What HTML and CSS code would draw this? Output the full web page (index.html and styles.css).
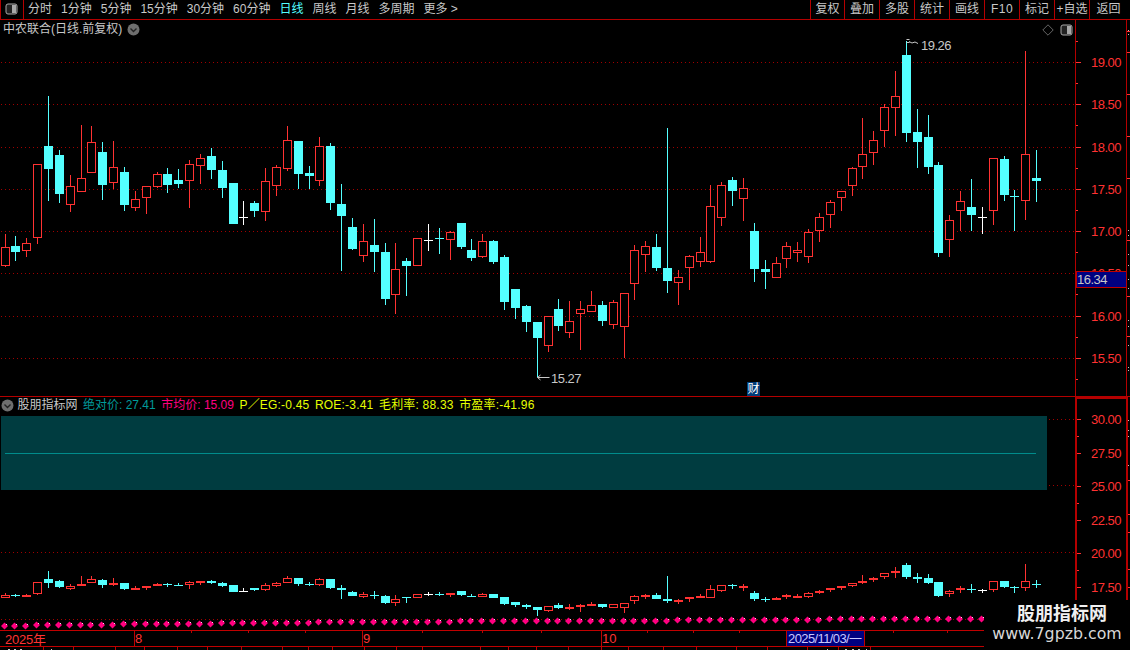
FILE: index.html
```html
<!DOCTYPE html>
<html lang="zh-CN">
<head>
<meta charset="utf-8">
<title>中农联合 日线</title>
<link rel="stylesheet" href="styles.css">
</head>
<body>
<div class="app">
  <header class="topbar">
    <div class="panel-toggle">
      <svg class="panel-icon" width="13" height="12" viewBox="0 0 13 12"><rect x="1" y="1" width="11" height="10" rx="2" fill="#222" stroke="#a8a8a8"/><rect x="7" y="2" width="4" height="8" fill="#a8a8a8"/></svg>
    </div>
    <nav class="periods">
      <span class="period">分时</span><span class="period">1分钟</span><span class="period">5分钟</span><span class="period">15分钟</span><span class="period">30分钟</span><span class="period">60分钟</span><span class="period active">日线</span><span class="period">周线</span><span class="period">月线</span><span class="period">多周期</span><span class="period">更多 &gt;</span>
    </nav>
    <div class="tools">
      <span class="tool first">复权</span><span class="tool">叠加</span><span class="tool">多股</span><span class="tool">统计</span><span class="tool">画线</span><span class="tool f10">F10</span><span class="tool">标记</span><span class="tool">+自选</span><span class="tool last">返回</span>
    </div>
  </header>

  <section class="pane main-pane">
    <div class="plot">
      <svg id="mainPlot" class="layer" viewBox="0 20 1075 376" width="1075" height="376"></svg>
      <div class="title-row">
        <span class="stock-title">中农联合(日线.前复权)</span>
        <svg class="chev" width="13" height="13" viewBox="0 0 13 13"><circle cx="6.5" cy="6.5" r="6" fill="#6e6e6e"/><path d="M3.5 5.5l3 3 3-3" fill="none" stroke="#222" stroke-width="1.4"/></svg>
      </div>
      <div class="pane-icons">
        <svg width="12" height="12" viewBox="0 0 12 12"><path d="M6 .8l5.2 5.2-5.2 5.2-5.2-5.2z" fill="none" stroke="#666"/></svg>
        <svg width="13" height="12" viewBox="0 0 13 12"><rect x="1" y="1" width="11" height="10" rx="2" fill="#222" stroke="#a8a8a8"/><rect x="7" y="2" width="4" height="8" fill="#a8a8a8"/></svg>
      </div>
      <span class="cai-badge">财</span>
    </div>
    <div class="axis"><svg id="mainAxis" viewBox="1076 20 50 376" width="50" height="376"></svg></div>
    <div class="edge"><svg id="mainEdge" viewBox="1127 20 3 376" width="3" height="376"></svg></div>
  </section>

  <section class="pane lower-pane">
    <div class="lower-left">
      <div class="legend">
        <svg class="chev-l" width="13" height="13" viewBox="0 0 13 13"><circle cx="6.5" cy="6.5" r="6" fill="#6e6e6e"/><path d="M3.5 5.5l3 3 3-3" fill="none" stroke="#222" stroke-width="1.4"/></svg>
        <span class="ind-name">股朋指标网</span>
        <span class="teal">绝对价: 27.41</span>
        <span class="pink">市均价: 15.09</span>
        <span class="yellow">P／EG:-0.45</span>
        <span class="yellow">ROE:-3.41</span>
        <span class="yellow">毛利率: 88.33</span>
        <span class="yellow">市盈率:-41.96</span>
      </div>
      <svg id="lowerPlot" viewBox="0 416 1075 214" width="1075" height="214"></svg>
    </div>
    <div class="axis axis-lower"><svg id="lowerAxis" viewBox="1077 399 49 231" width="49" height="231"></svg></div>
    <div class="edge edge-lower"><svg id="lowerEdge" viewBox="1128 397 2 233" width="2" height="233"></svg></div>
  </section>

  <svg id="timeAxis" class="time-axis" viewBox="0 630 1130 20" width="1130" height="20"></svg>

  <aside class="watermark">
    <div class="wm-cn">股朋指标网</div>
    <div class="wm-url">www.7gpzb.com</div>
  </aside>
</div>
<script src="chart.js"></script>
</body>
</html>
```
FILE: styles.css
```css
* { box-sizing: border-box; }
html, body { margin: 0; padding: 0; background: #000; }
body { font-family: "Liberation Sans", "Noto Sans CJK SC", sans-serif; color: #c8c8c8; font-size: 12px; }
svg { display: block; }
.app { position: relative; width: 1130px; height: 650px; overflow: hidden; background: #000; }

.topbar { display: flex; align-items: stretch; height: 20px; border-bottom: 1px solid #b40000; }
.panel-toggle { width: 24px; border-left: 1px solid #b40000; border-right: 1px solid #b40000; padding: 3px 0 0 4px; }
.periods { display: flex; gap: 9px; padding-left: 4px; line-height: 18px; font-size: 12px; }
.period { white-space: nowrap; }
.period.active { color: #54ffff; }
.tools { display: flex; margin-left: auto; padding-right: 3px; }
.tool { width: 35px; border-left: 1px solid #b40000; text-align: center; line-height: 18px; white-space: nowrap; }
.tool.first { width: 34px; }
.tool.last { width: 38px; }
.tool.f10 { letter-spacing: 0.5px; }

.pane { display: flex; }
.main-pane { height: 377px; border-bottom: 1px solid #b40000; }
.plot { position: relative; width: 1075px; }
.layer { position: absolute; left: 0; top: 0; }
.title-row { position: relative; display: flex; align-items: center; gap: 5px; padding: 2px 0 0 3px; line-height: 15px; }
.stock-title { letter-spacing: 0; }
.pane-icons { position: absolute; right: 2px; top: 4px; display: flex; gap: 6px; }
.cai-badge { position: absolute; left: 747px; top: 362px; width: 13px; height: 14px; background: #003c78; color: #fff; font-size: 12px; line-height: 14px; text-align: center; }

.axis { width: 52px; border-left: 1px solid #b40000; border-right: 1px solid #b40000; }
.edge { width: 3px; }

.lower-pane { height: 233px; }
.lower-left { width: 1075px; }
.legend { display: flex; align-items: center; height: 19px; padding: 0 0 3px 1px; white-space: nowrap; gap: 5.5px; line-height: 15px; }
.chev-l { margin-right: -2px; }
.ind-name { color: #c8c8c8; }
.teal { color: #009a9a; }
.pink { color: #ff0080; }
.yellow { color: #e6ff00; letter-spacing: 0.2px; }
.axis-lower { width: 53px; border-left-width: 2px; border-right-width: 2px; border-top: 2px solid #b40000; }
.edge-lower { width: 2px; }

.time-axis { position: relative; }

.watermark { position: absolute; left: 984px; top: 600px; width: 146px; height: 50px; background: #000; text-align: center; color: #e4e4e4; }
.wm-cn { font-size: 18px; font-weight: 700; line-height: 24px; padding-top: 2px; margin-left: 10px; color: #f0f0f0; }
.wm-url { font-family: "DejaVu Sans", sans-serif; font-size: 15.8px; line-height: 16px; color: #d8d8d8; }
```
FILE: chart.js
```js
// [centre, high, bodyTop, bodyBottom, low, type] in 3x crop coordinates per segment
var segments = [
  { x0: 0, y0: 90, rows: [
    [16,432,472,527,530,'r'],[46,438,468,486,513,'c'],[79,444,460,482,500,'r'],[112,223,223,443,461,'r'],
    [145,18,168,237,333,'c'],[178,180,195,312,339,'c'],[211,255,289,344,366,'r'],[244,105,265,305,305,'r'],
    [274,108,157,248,248,'r'],[307,156,186,285,330,'c'],[340,153,232,278,298,'r'],[373,231,246,345,363,'c'],
    [406,303,328,353,363,'r'],[439,289,289,323,372,'r'],[472,246,253,290,295,'r'],[502,234,252,285,309,'c'],
    [535,237,270,282,294,'c'],[568,210,223,272,354,'r'],[601,192,205,227,282,'r'],[634,174,198,240,267,'c'],
    [667,213,240,294,324,'c'],[700,279,279,402,402,'c'],[730,333,381,381,405,'w'],[763,333,339,363,381,'c'],
    [796,234,274,365,393,'r'],[829,225,232,287,318,'r']
  ]},
  { x0: 280, y0: 120, rows: [
    [22,18,61,146,153,'r'],[55,63,63,161,207,'c'],[88,138,159,168,207,'c'],[118,51,79,182,198,'r'],
    [151,69,78,249,270,'c'],[184,192,252,288,453,'c'],[217,294,321,387,390,'c'],[250,312,364,407,426,'r'],
    [283,297,375,396,456,'c'],[316,369,396,537,555,'c'],[346,369,448,524,582,'r'],[379,414,423,438,528,'c'],
    [412,355,355,437,437,'r'],[445,312,361,361,393,'w'],[478,324,355,355,402,'c'],[511,333,337,359,420,'r'],
    [544,309,309,381,387,'c'],[574,357,390,414,423,'c'],[607,342,364,410,414,'r'],[640,361,363,426,432,'c'],
    [673,405,411,546,570,'c'],[706,507,507,564,597,'c'],[739,555,558,606,636,'c'],[772,606,606,654,771,'c'],
    [805,589,589,677,696,'r'],[835,537,567,618,633,'c']
  ]},
  { x0: 560, y0: 120, rows: [
    [28,543,604,638,654,'r'],[61,543,568,581,690,'r'],[94,513,556,575,575,'r'],[127,543,555,603,618,'c'],
    [160,540,547,614,627,'r'],[193,520,520,620,714,'r'],[223,375,391,491,540,'r'],[256,363,379,404,456,'r'],
    [289,342,381,444,453,'c'],[322,24,444,483,519,'c'],[355,450,472,488,555,'r'],[388,405,409,443,510,'r'],
    [421,351,397,425,441,'r'],[451,195,259,425,429,'r'],[484,186,196,293,318,'r'],[517,171,180,213,258,'c'],
    [550,174,205,236,303,'r'],[583,309,333,447,486,'c'],[616,420,447,456,507,'c'],[649,411,430,473,473,'r'],
    [679,366,379,416,444,'r'],[712,366,391,398,426,'r'],[745,327,337,410,429,'r'],[778,279,292,332,366,'r'],
    [811,240,247,284,324,'r']
  ]},
  { x0: 790, y0: 30, rows: [
    [154,484,484,503,543,'r'],[187,412,415,467,498,'r'],[217,264,373,412,447,'r'],[250,303,331,368,405,'r'],
    [283,222,232,302,351,'r'],[316,123,199,233,318,'r'],[349,33,75,308,336,'c'],[382,237,306,336,414,'c'],
    [415,255,321,411,432,'c'],[445,396,405,669,681,'c'],[478,555,571,629,681,'r'],[511,483,514,542,603,'r'],
    [544,447,531,555,603,'c'],[577,531,560,560,612,'w'],[610,385,385,542,585,'r'],[643,378,387,495,513,'c'],
    [673,480,497,497,603,'c'],[706,63,373,512,570,'r'],[739,360,444,453,516,'c']
  ]}
];

var RED = '#ff3232', CYAN = '#54ffff', WHITE = '#ffffff', AXIS = '#c00000';
var COLORS = { r: RED, c: CYAN, w: WHITE };

var candles = [];
segments.forEach(function (s) {
  s.rows.forEach(function (r) {
    candles.push({
      x: Math.floor(s.x0 + r[0] / 3),
      hi: s.y0 + r[1] / 3, top: s.y0 + r[2] / 3, bot: s.y0 + r[3] / 3, lo: s.y0 + r[4] / 3,
      t: r[5]
    });
  });
});

function line(x1, y1, x2, y2, c, extra) {
  return '<line x1="' + x1 + '" y1="' + y1 + '" x2="' + x2 + '" y2="' + y2 + '" stroke="' + c + '" ' + (extra || '') + '/>';
}
function hdots(y, x1, x2) {
  var s = '';
  for (var x = x1 + 1; x < x2; x += 4) {
    s += '<rect x="' + x + '" y="' + y + '" width="1" height="1" fill="#a00000"/>';
  }
  return s;
}
function label(x, y, txt, c) {
  return '<text class="num" x="' + x + '" y="' + y + '" fill="' + c + '" font-family="Liberation Sans" font-size="13" letter-spacing="-0.5">' + txt + '</text>';
}

function drawCandle(k, mapY) {
  var cx = k.x + 0.5, c = COLORS[k.t];
  var hi = Math.round(mapY(k.hi)), top = Math.round(mapY(k.top)), bot = Math.round(mapY(k.bot)), lo = Math.round(mapY(k.lo));
  var out = '';
  if (hi < top) out += line(cx, hi, cx, top, c);
  if (lo > bot) out += line(cx, bot, cx, lo, c);
  if (bot - top <= 1) {
    out += '<rect x="' + (k.x - 4) + '" y="' + top + '" width="9" height="' + (k.t === 'r' ? 2 : 1) + '" fill="' + c + '"/>';
  } else if (k.t === 'r') {
    out += '<rect x="' + (k.x - 3.5) + '" y="' + (top + 0.5) + '" width="8" height="' + (bot - top - 1) + '" fill="#000" stroke="' + c + '"/>';
  } else {
    out += '<rect x="' + (k.x - 4) + '" y="' + top + '" width="9" height="' + (bot - top) + '" fill="' + c + '"/>';
  }
  return out;
}

function set(id, html) {
  var el = document.getElementById(id);
  el.setAttribute('shape-rendering', 'crispEdges');
  el.innerHTML = html;
}

/* main plot */
var html = '';
[62, 104, 147, 189, 231, 273, 316, 358].forEach(function (y) { html += hdots(y, 0, 1075); });
candles.forEach(function (k) { html += drawCandle(k, function (y) { return y; }); });
html += '<g shape-rendering="auto">';
html += '<path d="M906.5 39.5h3M906.5 42.5h3M909 41.5l3 1.5 3-1 3 1.5" fill="none" stroke="#c8c8c8"/>';
html += label(921, 50, '19.26', '#c8c8c8');
html += '<path d="M537.5 377.5h12M537.5 377.5l3-2.5M537.5 377.5l3 2.5" fill="none" stroke="#c8c8c8"/>';
html += label(551, 383, '15.27', '#c8c8c8');
html += '</g>';
set('mainPlot', html);

/* main axis */
var ax = '';
var mainLabels = [['19.00',62],['18.50',104],['18.00',147],['17.50',189],['17.00',231],['16.50',273],['16.00',316],['15.50',358]];
mainLabels.forEach(function (l, i) {
  ax += line(1076, l[1] + 0.5, 1081, l[1] + 0.5, RED);
  ax += label(1091, l[1] + 5, l[0], RED);
  ax += line(1076, l[1] + 21.5, 1078, l[1] + 21.5, RED);
});
ax += line(1076, 41.5, 1078, 41.5, RED);
ax += '<rect x="1076" y="271.5" width="50" height="16" fill="#000080" stroke="' + AXIS + '"/>';
ax += label(1077, 284, '16.34', '#c8c8c8');
set('mainAxis', ax);

/* right edge */
function edge(ys, whites) {
  var s = '';
  ys.forEach(function (y) { s += line(1127, y + 0.5, 1130, y + 0.5, RED); });
  whites.forEach(function (y) { s += line(1128.5, y, 1128.5, y + 1, '#c8c8c8'); });
  return s;
}
set('mainEdge', edge([31, 52, 94, 136, 178, 240, 296, 336], [30, 34, 230, 235, 254, 265, 279, 288, 320, 326, 345, 367, 370]));
set('lowerEdge', edge([480, 514, 532, 569, 587], [420, 430, 436, 465]));

/* lower plot */
var lo = '';
[419, 485, 552, 619].forEach(function (y) { lo += hdots(y, 0, 1075); });
lo += '<rect x="1" y="416" width="1046" height="74" fill="#003c40"/>';
lo += line(5, 453.5, 1036, 453.5, '#008c8c');
var mapLow = function (y) { return 566.0 + (y - 62.3) * 0.1584; };
candles.forEach(function (k) { lo += drawCandle(k, mapLow); });
candles.forEach(function (k) {
  var x = k.x - 0.5;
  if (x > 984) return;
  var y = x < 35 ? 626 : x < 120 ? 625 : x < 220 ? 624 : x < 315 ? 623 : x < 455 ? 622 : x < 675 ? 621 : x < 828 ? 620 : 619;
  lo += '<path d="M' + (x - 3.5) + ' ' + y + 'l3.5 -3.5l3.5 3.5l-3.5 3.5z" fill="#ff0080" shape-rendering="auto"/>';
  lo += '<rect x="' + Math.round(x + 1) + '" y="' + (y - 2) + '" width="1" height="1" fill="#ffd0e8"/>';
});
set('lowerPlot', lo);

/* lower axis */
var la = '';
[['30.00',419],['27.50',453],['25.00',486],['22.50',520],['20.00',553],['17.50',587]].forEach(function (l) {
  la += line(1077, l[1] + 0.5, 1081, l[1] + 0.5, RED);
  la += label(1091, l[1] + 5, l[0], RED);
});
[436, 503, 570].forEach(function (y) { la += line(1077, y + 0.5, 1079, y + 0.5, RED); });
set('lowerAxis', la);

/* time axis */
var t = '';
t += line(0, 630.5, 984, 630.5, AXIS);
t += line(0, 646.5, 984, 646.5, AXIS);
[134, 362, 601].forEach(function (x) { t += line(x + 0.5, 631, x + 0.5, 646, AXIS); });
[191, 248, 305, 422, 482, 541, 647, 693, 739, 893, 947].forEach(function (x) { t += line(x + 0.5, 631, x + 0.5, 633, AXIS); });
[43, 73, 115, 144, 177, 207, 241, 282, 308, 332, 364, 396, 422, 480, 508, 536, 568, 601, 628, 663, 696, 736, 767, 807, 838, 870].forEach(function (x) {
  t += line(x + 0.5, 647, x + 0.5, 650, AXIS);
});
[8, 9, 14, 15, 20, 21, 51, 827, 845, 846, 852, 853, 858, 859, 866].forEach(function (x) {
  t += '<rect x="' + x + '" y="649" width="1" height="1" fill="#c8c8c8"/>';
});
var T = '<text font-family="Liberation Sans, Noto Sans CJK SC" font-size="13" fill="' + RED + '" ';
t += T + 'x="5" y="644" letter-spacing="-0.2">2025年</text>';
t += T + 'x="135" y="643">8</text>';
t += T + 'x="363" y="643">9</text>';
t += T + 'x="602" y="643">10</text>';
t += '<rect x="786.5" y="630.5" width="78" height="16" fill="#000080" stroke="' + AXIS + '"/>';
t += '<text font-family="Liberation Sans, Noto Sans CJK SC" font-size="13" fill="#c8c8ff" letter-spacing="-0.6" x="788" y="643">2025/11/03/一</text>';
set('timeAxis', t);
```
